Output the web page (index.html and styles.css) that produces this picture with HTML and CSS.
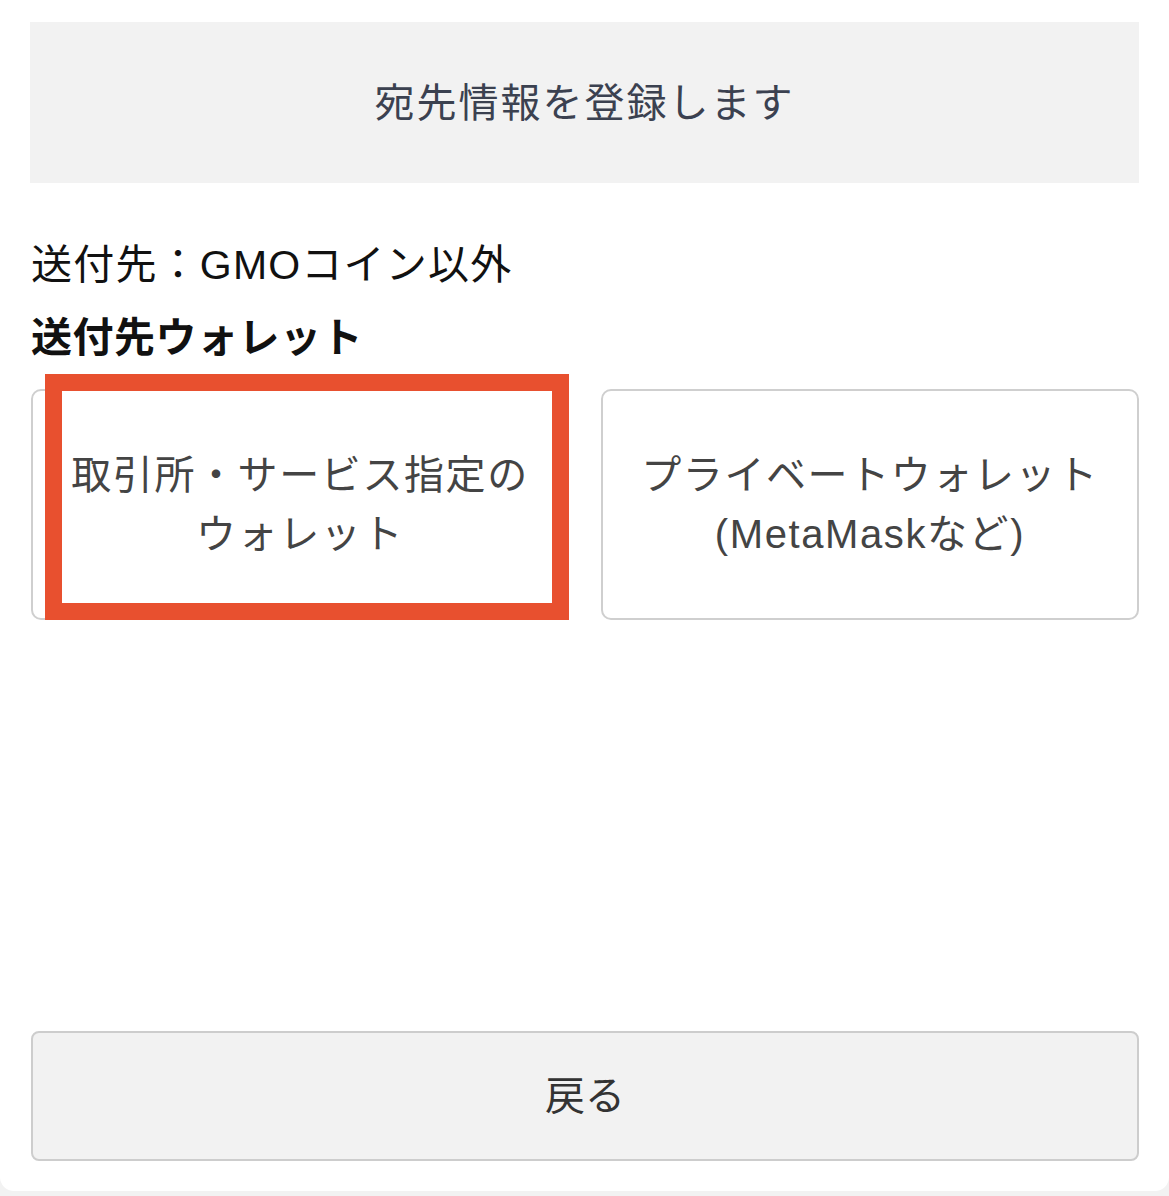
FILE: index.html
```html
<!DOCTYPE html>
<html lang="ja">
<head>
<meta charset="utf-8">
<title>宛先情報を登録します</title>
<link rel="stylesheet" href="styles.css">
</head>
<body>
<div class="page">
  <div class="header">宛先情報を登録します</div>
  <div class="info">
    <p class="dest">送付先：GMOコイン以外</p>
    <p class="label">送付先ウォレット</p>
  </div>
  <div class="choices">
    <div class="card card-highlighted">
      <span class="card-text">取引所・サービス指定の<br>ウォレット</span>
      <div class="highlight"></div>
    </div>
    <div class="card">
      <span class="card-text">プライベートウォレット<br>(MetaMaskなど)</span>
    </div>
  </div>
  <div class="footer">
    <div class="back-btn">戻る</div>
  </div>
</div>
</body>
</html>
```
FILE: styles.css
```css
html, body {
  margin: 0;
  padding: 0;
}
body {
  background: #f2f2f2;
  font-family: "Liberation Sans", "Noto Sans CJK JP", "Noto Sans", sans-serif;
}
.page {
  background: #ffffff;
  min-height: 1191px;
  box-sizing: border-box;
  padding: 22px 30px 30px 30px;
  border-radius: 0 0 14px 14px;
  display: flex;
  flex-direction: column;
}
.header {
  background: #f2f2f2;
  height: 161px;
  box-sizing: border-box;
  padding-bottom: 6px;
  display: flex;
  align-items: center;
  justify-content: center;
  font-size: 40px;
  letter-spacing: 2px;
  color: #3b4150;
}
.info {
  margin-top: 53px;
  padding-left: 1px;
}
.dest {
  margin: 0;
  font-size: 41px;
  line-height: 58px;
  color: #111;
  letter-spacing: 1.2px;
}
.label {
  margin: 15px 0 0 0;
  font-size: 41px;
  line-height: 58px;
  font-weight: bold;
  color: #111;
  letter-spacing: 0.5px;
}
.choices {
  margin-top: 22px;
  display: grid;
  grid-template-columns: 1fr 1fr;
  gap: 32px;
  padding-left: 1px;
}
.card {
  height: 231px;
  box-sizing: border-box;
  border: 2px solid #cfcfcf;
  border-radius: 10px;
  display: flex;
  align-items: center;
  justify-content: center;
  text-align: center;
  position: relative;
}
.card-text {
  font-size: 40px;
  line-height: 59px;
  color: #444;
  letter-spacing: 1.6px;
}
.highlight {
  position: absolute;
  left: 12px;
  top: -17px;
  right: -2px;
  bottom: -2px;
  border: 17px solid #e8502f;
}
.footer {
  margin-top: auto;
  padding-left: 1px;
}
.back-btn {
  height: 130px;
  box-sizing: border-box;
  padding-bottom: 6px;
  background: #f2f2f2;
  border: 2px solid #cdcdcd;
  border-radius: 8px;
  display: flex;
  align-items: center;
  justify-content: center;
  font-size: 40px;
  color: #333;
}
```
